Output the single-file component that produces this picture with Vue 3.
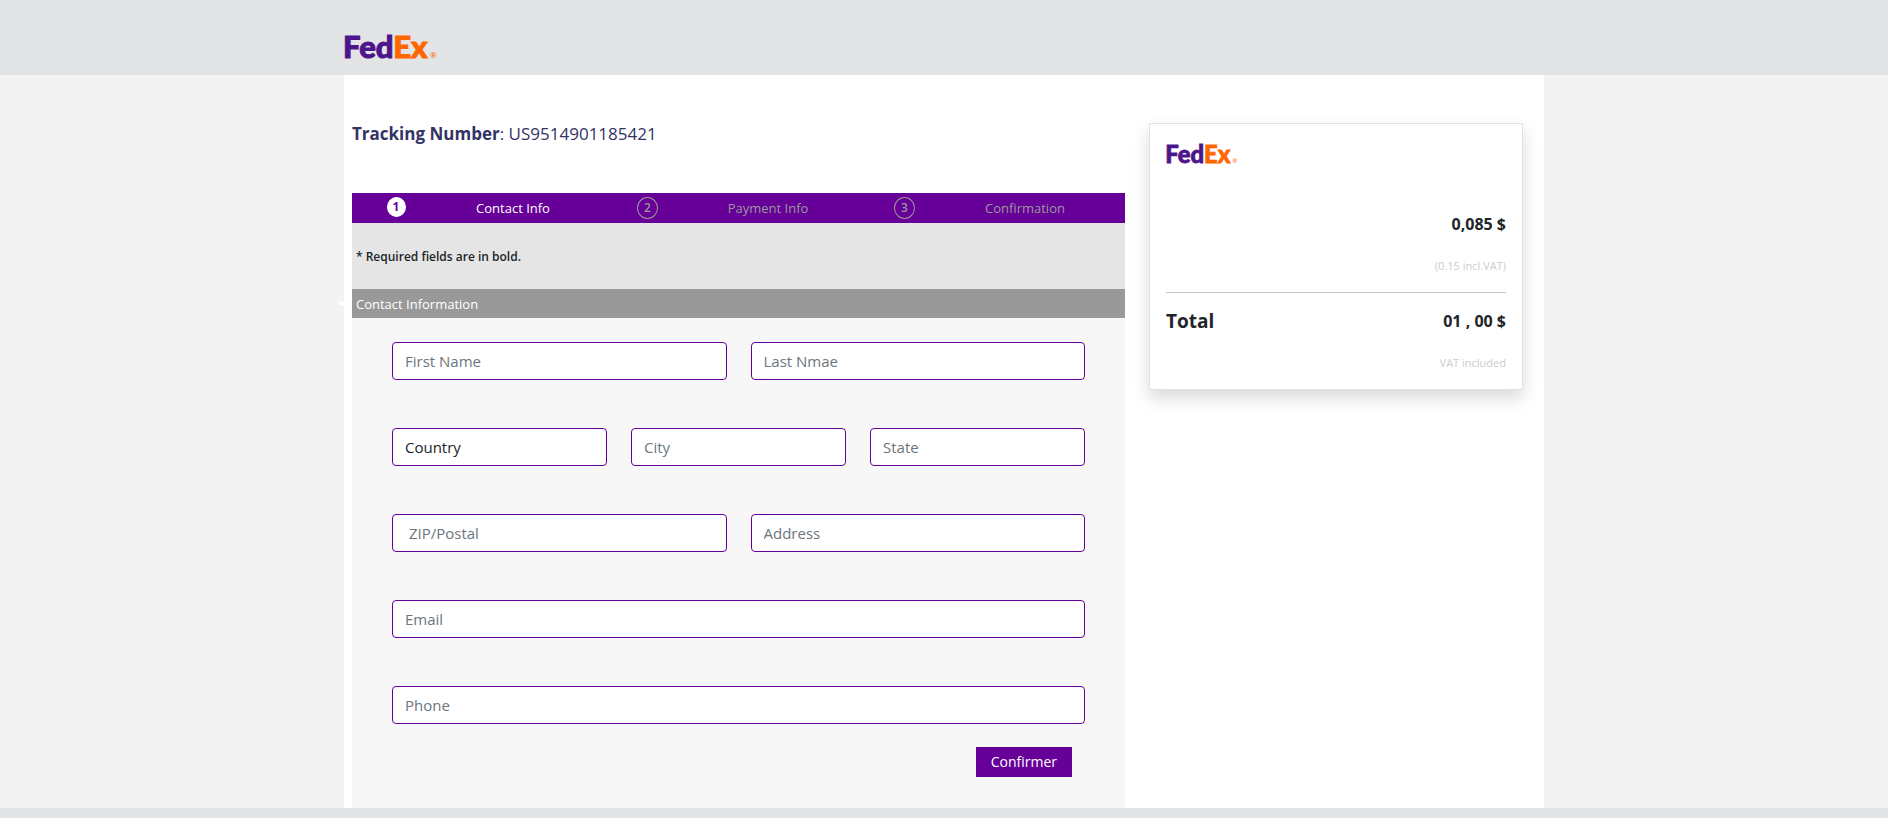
<script setup>
import { h } from 'vue'

const steps = [
  { label: 'Contact Info', active: true },
  { label: 'Payment Info', active: false },
  { label: 'Confirmation', active: false },
]

const rows = [
  [
    { id: 'first-name', hint: 'First Name' },
    { id: 'last-name', hint: 'Last Nmae' },
  ],
  [
    { id: 'country', hint: 'Country', select: true },
    { id: 'city', hint: 'City' },
    { id: 'state', hint: 'State' },
  ],
  [
    { id: 'zip', hint: '\u00a0ZIP/Postal' },
    { id: 'address', hint: 'Address' },
  ],
  [{ id: 'email', hint: 'Email', type: 'email' }],
  [{ id: 'phone', hint: 'Phone', type: 'tel' }],
]

const BrandLogo = () =>
  h('svg', { viewBox: '0 0 92 26', role: 'img', 'aria-label': 'FedEx' }, [
    h(
      'text',
      {
        x: -1,
        y: 25,
        'font-family': 'Lato, sans-serif',
        'font-weight': 900,
        'font-size': 31,
        'stroke-width': 1,
      },
      [
        h('tspan', { fill: '#4d148c', stroke: '#4d148c' }, 'Fed'),
        h('tspan', { fill: '#ff6600', stroke: '#ff6600' }, 'Ex'),
      ],
    ),
    h(
      'text',
      { x: 86, y: 25, 'font-family': '"Open Sans", sans-serif', 'font-size': 8, fill: '#ff6600' },
      '®',
    ),
  ])
</script>

<template>
  <div class="page">
    <header class="top">
      <div class="top-inner"><BrandLogo class="logo" /></div>
    </header>

    <main class="content">
      <section class="main-col">
        <h1 class="tracking"><b>Tracking Number</b>: US9514901185421</h1>

        <ol class="steps">
          <li v-for="(step, i) in steps" :key="step.label" :class="{ active: step.active }">
            <span class="num">{{ i + 1 }}</span>
            <span class="label">{{ step.label }}</span>
          </li>
        </ol>
        <p class="required">* Required fields are in bold.</p>
        <h2 class="section-title">Contact Information</h2>

        <form class="form" @submit.prevent>
          <div v-for="(row, r) in rows" :key="r" class="row">
            <div v-for="f in row" :key="f.id" class="field">
              <select v-if="f.select" :id="f.id" class="control" :aria-label="f.hint">
                <option>{{ f.hint }}</option>
              </select>
              <input
                v-else
                :id="f.id"
                class="control"
                :type="f.type || 'text'"
                :placeholder="f.hint"
                :aria-label="f.hint.trim()"
              />
            </div>
          </div>
          <button class="submit" type="submit">Confirmer</button>
        </form>
      </section>

      <aside class="card">
        <BrandLogo class="logo small" />
        <p class="price">0,085 $</p>
        <p class="note">(0.15 incl.VAT)</p>
        <hr />
        <p class="total"><span>Total</span><b>01 , 00 $</b></p>
        <p class="note">VAT included</p>
      </aside>
    </main>

    <footer class="bottom"></footer>
  </div>
</template>

<style>
body {
  margin: 0;
  background: #f3f3f3;
}
</style>

<style scoped>
* {
  box-sizing: border-box;
}
.page {
  display: flex;
  flex-direction: column;
  min-height: 100vh;
  font-family: "Segoe UI", "Open Sans", "Noto Sans", sans-serif;
  font-size: 15px;
  line-height: 24px;
  color: #212529;
}
h1, h2, p, ol {
  margin: 0;
  padding: 0;
}
.top {
  background: #e3e4e6;
  padding: 33px 0 16px;
}
.top-inner {
  max-width: 1200px;
  margin: 0 auto;
}
.logo {
  display: block;
  width: 92px;
  height: 26px;
  overflow: visible;
}
.small {
  width: 71px;
  height: 20px;
}
.content {
  flex: 1;
  display: grid;
  grid-template-columns: 773fr 374fr;
  gap: 24px;
  width: 100%;
  max-width: 1200px;
  margin: 0 auto;
  padding: 0 21px 0 8px;
  background: #fff;
}
.main-col {
  display: flex;
  flex-direction: column;
}
.tracking {
  margin: 47px 0;
  font-size: 17px;
  line-height: 24px;
  font-weight: 500;
  color: #333366;
}
.tracking b {
  font-weight: 700;
}
.steps {
  display: grid;
  grid-template-columns: 88fr 146fr 123fr 118fr 155fr 86fr 57fr;
  align-items: center;
  justify-items: center;
  height: 30px;
  list-style: none;
  background: #660099;
  color: #999;
  font-size: 13px;
  white-space: nowrap;
}
.steps li {
  display: contents;
}
.num {
  align-self: start;
  width: 21px;
  height: 22px;
  margin-top: 4px;
  border: 1px solid #999;
  border-radius: 50%;
  font-size: 12px;
  font-weight: 600;
  line-height: 20px;
  text-align: center;
}
.active .label {
  color: #fff;
}
.active .num {
  width: 19px;
  height: 20px;
  border-color: #fff;
  background: #fff;
  color: #660099;
  font-weight: 700;
  line-height: 18px;
}
.required {
  padding: 22px 4px 20px;
  background: #e5e5e5;
  font-size: 12px;
  font-weight: 600;
}
.section-title {
  position: relative;
  padding: 3px 4px 2px;
  background: #999;
  color: #fff;
  font-size: 13px;
  font-weight: 400;
}
.section-title::before {
  content: "";
  position: absolute;
  left: -13px;
  top: 12px;
  width: 5px;
  height: 5px;
  border-radius: 50%;
  background: #fff;
}
.form {
  flex: 1;
  display: flex;
  flex-direction: column;
  gap: 48px;
  padding: 24px 40px 0;
  background: #f7f7f7;
}
.row {
  display: flex;
  gap: 24px;
}
.field {
  flex: 1;
}
.control {
  display: block;
  width: 100%;
  height: 38px;
  padding: 0 12px;
  border: 1px solid #660099;
  border-radius: 4px;
  background: #fff;
  color: #212529;
  font: inherit;
  appearance: none;
}
.control::placeholder {
  color: #6c757d;
  opacity: 1;
}
.submit {
  align-self: flex-end;
  margin: -25px 13px 31px 0;
  padding: 0 15px;
  height: 30px;
  border: 0;
  background: #660099;
  color: #fff;
  font: inherit;
  font-size: 14px;
}
.card {
  align-self: start;
  margin-top: 48px;
  padding: 20px 16px 14px;
  border: 1px solid #dee2e6;
  background: #fff;
  box-shadow: 0 8px 16px rgba(0, 0, 0, 0.15);
  text-align: right;
}
.price {
  margin-top: 48px;
  font-size: 16px;
  font-weight: 700;
}
.note {
  margin-top: 18px;
  font-size: 11px;
  color: #ccc;
}
hr {
  margin: 14px 0 16px;
  border: 0;
  border-top: 1px solid #c3c4c6;
}
.total {
  display: flex;
  justify-content: space-between;
  font-size: 16px;
}
.total span {
  font-size: 19px;
  font-weight: 700;
}
.bottom {
  height: 10px;
  background: #e3e4e6;
}
</style>
